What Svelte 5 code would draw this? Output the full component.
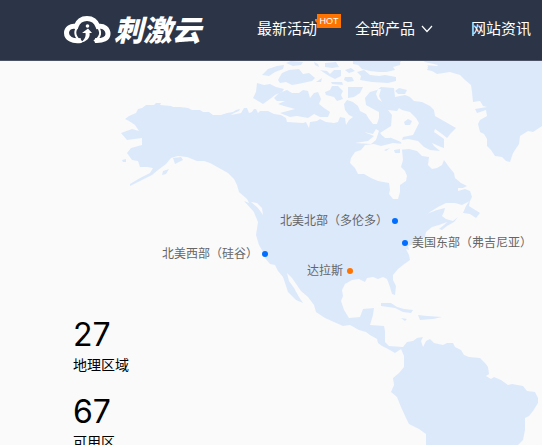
<script>
	const nav = [
		{ title: '最新活动', hot: true },
		{ title: '全部产品', menu: true },
		{ title: '网站资讯' }
	];

	const stats = [
		{ value: 27, label: '地理区域' },
		{ value: 67, label: '可用区' }
	];

	// x and y are units of the map's viewBox
	const regions = [
		{ name: '北美西部（硅谷）', x: 265, y: 254, side: 'left' },
		{ name: '北美北部（多伦多）', x: 395, y: 221, side: 'left' },
		{ name: '美国东部（弗吉尼亚）', x: 405, y: 243, side: 'right' },
		{ name: '达拉斯', x: 350, y: 271, side: 'left', active: true }
	];

	const map = { top: 61, width: 542, height: 384 };
</script>

<header>
	<a class="logo" href="/">
		<svg viewBox="0 0 47 28" aria-hidden="true">
			<path
				class="outline"
				d="M17 24.500C8 26 2.500 22 2.500 17C2.500 12 7 9.500 12 10.500C14 5 18 2.500 23 2.500C28 2.500 32 5 34 10.500C40 9.500 44 13 44 18C44 22.500 39 25 31 24.500"
			/>
			<path class="inner" d="M13.500 11C9.500 16 11 22 18 26" />
			<path class="inner" d="M33 10C38 16 37 21 30 25" />
			<circle class="solid" cx="23.500" cy="10" r="1.800" />
			<path class="solid" d="M18 17L24 12.500L28 17H25.500C26.500 21.500 23 25.500 16 27C21 23.500 22 20.500 21.500 17Z" />
		</svg>
		<span>刺激云</span>
	</a>
	<nav>
		{#each nav as item}
			<a href="/">
				{item.title}
				{#if item.hot}<span class="hot">HOT</span>{/if}
				{#if item.menu}
					<svg class="arrow" viewBox="0 0 12 8" aria-hidden="true"><path d="M1 1L6 6.500L11 1" /></svg>
				{/if}
			</a>
		{/each}
	</nav>
</header>

<main>
	<div class="map">
		<svg viewBox="0 61 542 384" aria-hidden="true">
			<g class="land">
				<path
					d="M125 119L129 116L136 113L138 109L142 108L146 105L154 105L156 103L161 103L160 105L171 106L173 107L180 107L188 108L192 110L200 110L203 112L209 112L213 115L221 115L227 113L233 112L236 110L240 109L239 111L234 113L231 115L236 114L241 113L244 108L247 108L249 113L252 112L254 109L256 109L258 113L260 111L268 111L274 114L281 115L286 118L287 122L303 123L306 122L309 128L310 122L317 121L320 119L326 122L334 123L338 122L340 117L345 118L346 125L349 120L353 117L349 115L345 110L344 104L347 100L353 102L358 106L360 111L366 114L369 119L373 124L377 124L379 118L379 112L375 110L366 105L365 98L370 92L377 90L381 87L394 88L395 97L405 95L410 97L414 101L422 102L430 106L434 110L435 116L442 120L449 124L456 128L451 133L447 138L442 134L435 129L434 132L437 134L444 139L444 148L441 147L432 143L434 146L440 151L430 150L424 147L418 141L408 139L402 140L403 137L413 135L416 129L419 123L416 118L410 112L402 110L399 108L397 111L388 110L392 115L391 126L380 133L383 136L389 137L401 142L402 147L397 150L409 149L417 151L422 156L429 157L428 165L432 169L437 168L442 165L444 160L449 167L454 173L455 178L461 183L467 186L463 188L458 188L458 191L465 189L470 191L472 197L470 201L462 205L455 203L446 203L438 207L430 212L423 218L429 213L437 210L445 208L444 212L442 216L446 219L453 221L458 217L454 222L447 226L442 230L439 229L444 225L447 222L439 225L432 227L426 232L425 237L418 240L414 244L408 246L409 250L406 249L409 255L410 260L403 265L398 269L393 275L393 280L396 286L395 295L392 294L390 287L387 279L383 277L378 279L373 277L367 278L365 282L359 279L352 280L345 284L342 290L343 296L341 301L344 310L349 318L360 317L363 309L374 308L373 315L370 325L384 326L385 331L385 342L389 346L403 347L407 342L413 341L417 338L423 337L421 341L423 347L426 341L430 339L434 343L443 345L447 343L453 343L455 347L461 350L464 355L469 357L480 358L485 363L488 367L489 374L486 376L491 379L494 377L501 380L508 385L512 384L523 386L527 391L535 392L538 398L538 403L533 411L529 416L525 418L525 430L523 440L518 445H426V434L419 429L409 424L406 418L401 407L397 397L391 392L394 385L393 378L399 373L404 367L404 356L401 349L395 353L388 349L382 346L378 343L377 339L370 335L366 332L359 330L350 325L343 326L325 318L316 312L314 305L308 297L301 291L292 278L287 273L289 281L294 288L299 297L303 303L296 300L288 292L283 277L278 271L275 265L270 264L265 258L263 252L259 245L256 235L258 222L253 210L247 199L239 192L237 185L234 179L228 173L219 168L210 163L204 161L197 161L187 157L178 156L171 158L166 164L158 170L152 175L142 180L130 186L130 184L140 178L150 173L153 168L147 167L140 167L138 161L132 160L127 153L131 148L142 145L142 138L127 140L121 133L132 129L139 131L135 125L129 121Z"
				/>
				<path
					d="M424 61L428 66L427 70L432 71L437 74L450 72L460 75L465 80L471 85L472 92L473 102L480 101L483 106L487 107L475 109L477 113L486 110L487 116L480 120L478 124L480 132L484 134L487 139L487 146L491 150L495 156L502 157L506 161L510 162L513 153L519 144L520 136L528 131L533 132L542 126V61Z"
				/>
				<path
					d="M257 83L264 85L270 84L276 87L284 89L282 92L275 95L270 99L263 104L258 101L253 98L256 92Z"
				/>
				<path
					d="M274 98L279 93L287 90L292 93L299 93L303 90L308 91L310 98L314 93L318 92L321 99L319 104L324 108L330 112L328 117L320 117L314 114L308 118L297 116L290 117L280 113L295 109L284 106L278 104L285 101L277 101Z"
				/>
				<path d="M325 92L330 90L332 86L338 86L343 91L341 95L343 99L337 101L334 97L326 95Z" />
				<path d="M348 87L363 87L360 93L354 97L348 98Z" />
				<path
					d="M278 80L282 73L289 70L299 69L303 74L309 73L315 78L312 81L298 84L292 85L286 82L280 83Z"
				/>
				<path d="M262 75L268 69L277 66L284 65L283 69L275 72L269 76ZM286 63L291 61L303 62L301 65L293 66Z" />
				<path d="M320 70L327 71L330 74L334 70L341 70L341 76L335 79L329 76ZM325 63L336 62L339 67L332 68L325 67Z" />
				<path d="M345 70L351 68L355 71L349 73ZM345 77L352 77L354 81L348 82L344 80ZM314 62L318 64L319 67L315 65Z" />
				<path d="M316 82L322 78L321 82ZM331 82L342 82L343 85L332 84Z" />
				<path
					d="M353 61L401 61L400 65L393 67L395 70L386 72L379 72L370 71L362 69L358 65L353 64Z"
				/>
				<path
					d="M357 72L364 70L370 75L379 76L385 75L396 77L396 81L388 83L372 82L360 80L361 76Z"
				/>
				<path d="M395 91L399 88L407 90L405 94L398 94Z" />
				<path d="M404 122L408 119L412 121L410 125L405 125Z" />
				<path d="M394 149L400 149L400 153L395 153ZM384 150L390 148L386 151Z" />
				<path d="M470 200L466 206L463 213L470 214L476 218L480 213L477 211L472 208L469 206Z" />
				<path d="M381 303L391 303L397 307L404 309L413 310L411 313L403 312L395 308L381 306Z" />
				<path d="M418 315L427 316L442 317L433 319L420 320ZM401 318L407 319L405 321Z" />
				<path d="M173 158L181 157L183 160L175 164ZM163 171L169 169L166 174L162 175ZM122 160L126 159L126 162L123 162Z" />
				<path d="M244 201L252 204L258 208L263 215L255 213Z" />
			</g>
			<g class="water">
				<path
					d="M404 144L393 143L381 146L374 144L365 145L361 150L355 152L351 158L350 163L355 168L358 174L364 174L371 178L378 181L389 183L390 190L389 194L393 199L398 199L400 192L400 185L406 181L407 176L405 171L401 167L403 160L402 150Z"
				/>
				<path d="M400 62L425 62L438 65L437 66L425 65L428 69L402 68Z" />
				<path d="M378 89L376 94L378 99L382 102L379 96L381 89Z" />
				<path d="M364 132L373 134L376 129L379 131L376 140L371 144L355 143L368 141L374 136Z" />
				<path d="M381 134L385 130L391 132L390 138L385 138Z" />
				<path d="M251 202L257 203L262 208L263 215L258 208Z" />
			</g>
			<path class="land" d="M394 150L400 149L400 153L395 153ZM384 150L390 148L386 151Z" />
		</svg>
		{#each regions as region}
			<span
				class="pin {region.side}"
				class:active={region.active}
				style="left: {(region.x / map.width) * 100}%; top: {((region.y - map.top) / map.height) * 100}%"
			>
				<span class="name">{region.name}</span>
			</span>
		{/each}
	</div>

	<dl class="stats">
		{#each stats as stat}
			<div>
				<dt>{stat.label}</dt>
				<dd>{stat.value}</dd>
			</div>
		{/each}
	</dl>
</main>

<style>
	:global(body) {
		background: #fafafa;
		font-family: 'Liberation Sans', 'Noto Sans CJK SC', sans-serif;
	}

	:global(html) {
		overflow-x: hidden;
		scrollbar-width: none;
	}

	header {
		display: flex;
		align-items: center;
		height: 60px;
		padding-left: 64px;
		background: #2b3547;
		border-bottom: 1px solid #4a5266;
	}

	header a {
		color: #fff;
		text-decoration: none;
		white-space: nowrap;
	}

	.logo {
		display: flex;
		align-items: center;
		gap: 3px;
		margin-right: 56px;
		font-size: 29px;
		line-height: 32px;
		font-weight: 900;
		font-style: italic;
		font-family: 'Noto Sans CJK SC', sans-serif;
	}

	.logo svg {
		width: 47px;
		height: 28px;
	}

	.logo span {
		padding-bottom: 4px;
	}

	.solid {
		fill: #fff;
	}

	.outline,
	.inner {
		fill: none;
		stroke: #fff;
		stroke-width: 5;
	}

	.inner {
		stroke-width: 2;
	}

	nav {
		display: flex;
		gap: 38px;
		padding-bottom: 2px;
		font-size: 15px;
		line-height: 20px;
	}

	nav a {
		position: relative;
		display: flex;
		align-items: center;
		gap: 6px;
	}

	.hot {
		position: absolute;
		left: 100%;
		bottom: 11px;
		width: 24px;
		background: #ff7300;
		font-size: 9px;
		line-height: 14px;
		text-align: center;
	}

	.hot::before {
		content: '';
		position: absolute;
		right: 100%;
		top: 5px;
		border: 2px solid transparent;
		border-top-color: #ff7300;
		border-right-color: #ff7300;
		border-left-width: 0;
	}

	.arrow {
		width: 12px;
		height: 8px;
		fill: none;
		stroke: #fff;
		stroke-width: 1.2;
	}

	main {
		display: grid;
		overflow: hidden;
	}

	.map,
	.stats {
		grid-area: 1 / 1;
	}

	.map {
		position: relative;
		align-self: start;
	}

	.map svg {
		display: block;
		width: 100%;
	}

	.land {
		fill: #dce9fb;
	}

	.water {
		fill: #fafafa;
	}

	.pin {
		position: absolute;
		width: 6px;
		height: 6px;
		border-radius: 50%;
		background: #006eff;
		transform: translate(-50%, -50%);
	}

	.pin.active {
		background: #ff7300;
	}

	.name {
		position: absolute;
		top: -5px;
		color: #666;
		font-size: 12px;
		line-height: 16px;
		white-space: nowrap;
	}

	.left .name {
		right: 10px;
	}

	.right .name {
		left: 10px;
	}

	.stats {
		position: relative;
		margin: 0;
		padding: 256px 0 0 73px;
	}

	.stats div {
		display: flex;
		flex-direction: column-reverse;
		margin-bottom: 17px;
	}

	dt {
		font-size: 14px;
		line-height: 24px;
	}

	dd {
		margin: 0;
		font-family: Inter, sans-serif;
		font-size: 32px;
		line-height: 36px;
	}
</style>
